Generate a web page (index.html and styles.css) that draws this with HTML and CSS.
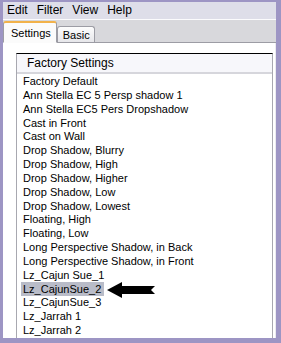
FILE: index.html
```html
<!DOCTYPE html>
<html lang="en">
<head>
    <meta charset="UTF-8">
    <title>Factory Settings</title>
    <link rel="stylesheet" href="styles.css">
</head>
<body>
    <!-- Dialog window with menu, tabs and preset list -->
    <div class="window">
        <div class="menubar">
            <span>Edit</span>
            <span>Filter</span>
            <span>View</span>
            <span>Help</span>
        </div>
        <div class="tabs">
            <div class="tab active">Settings</div>
            <div class="tab">Basic</div>
        </div>
        <div class="panel">
            <div class="list">
                <div class="list-header">Factory Settings</div>
                <div class="row">Factory Default</div>
                <div class="row">Ann Stella EC 5 Persp shadow 1</div>
                <div class="row">Ann Stella EC5 Pers Dropshadow</div>
                <div class="row">Cast in Front</div>
                <div class="row">Cast on Wall</div>
                <div class="row">Drop Shadow, Blurry</div>
                <div class="row">Drop Shadow, High</div>
                <div class="row">Drop Shadow, Higher</div>
                <div class="row">Drop Shadow, Low</div>
                <div class="row">Drop Shadow, Lowest</div>
                <div class="row">Floating, High</div>
                <div class="row">Floating, Low</div>
                <div class="row">Long Perspective Shadow, in Back</div>
                <div class="row">Long Perspective Shadow, in Front</div>
                <div class="row">Lz_Cajun Sue_1</div>
                <div class="row selected">
                    <span class="pick">Lz_CajunSue_2</span>
                    <svg class="arrow" width="50" height="18" viewBox="0 0 50 18">
                        <polygon points="0,9 15,1 15,5 48,5 44,9 48,13 15,13 15,17" fill="#000"/>
                    </svg>
                </div>
                <div class="row">Lz_CajunSue_3</div>
                <div class="row">Lz_Jarrah 1</div>
                <div class="row">Lz_Jarrah 2</div>
            </div>
        </div>
    </div>
</body>
</html>
```

FILE: styles.css
```css
/* Window frame */
body {
    margin: 0;
    padding: 2px 5px 5px 3px;
    background-color: #9d95c4;
    font-family: "Liberation Sans", sans-serif;
    height: 343px;
    box-sizing: border-box;
    overflow: hidden;
}

.window {
    height: 336px;
    background-color: #d8d8dc;
    display: flex;
    flex-direction: column;
    overflow: hidden;
}

/* Menu */
.menubar {
    height: 17px;
    background-color: #dedee9;
    border-bottom: 1px solid #fbfbfd;
    display: flex;
    align-items: center;
    font-size: 12px;
    color: #000;
    padding-left: 4px;
    gap: 9px;
}

/* Tabs */
.tabs {
    height: 22px;
    display: flex;
    align-items: flex-end;
    font-size: 11px;
    border-bottom: 1px solid #9c9ca4;
}

.tab {
    height: 15px;
    padding: 0 4px 0 5px;
    border: 1px solid #9c9ca4;
    border-bottom: none;
    border-radius: 3px 3px 0 0;
    background: linear-gradient(#fdfdfd, #e6e6ea);
    line-height: 16px;
}

.tab.active {
    height: 19px;
    line-height: 20px;
    padding: 0 5px 0 7px;
    background: #fbfbfb;
    border-top: 2px solid #f2b24a;
    border-bottom: 1px solid #fbfbfb;
    margin-bottom: -1px;
}

/* Panel */
.panel {
    flex: 1;
    background-color: #fff;
    padding: 10px 2px 0 13px;
    border-right: 1px solid #ececf0;
}

.list {
    height: 100%;
    border-top: 1px solid #000;
    border-left: 1px solid #a8a8b0;
    border-right: 1px solid #a8a8b0;
    font-size: 11px;
}

.list-header {
    height: 18px;
    line-height: 18px;
    padding-left: 10px;
    background-color: #f7f7fb;
    border-bottom: 2px solid #d6d6dc;
    font-size: 12px;
    margin-bottom: 1px;
}

.row {
    height: 13.85px;
    line-height: 13.85px;
    padding-left: 6px;
    white-space: nowrap;
    position: relative;
}

.pick {
    background-color: #b9bcc8;
    padding: 1px 3px 1px 2px;
    margin-left: -2px;
}

.arrow {
    position: absolute;
    left: 90px;
    top: -2px;
}
```
